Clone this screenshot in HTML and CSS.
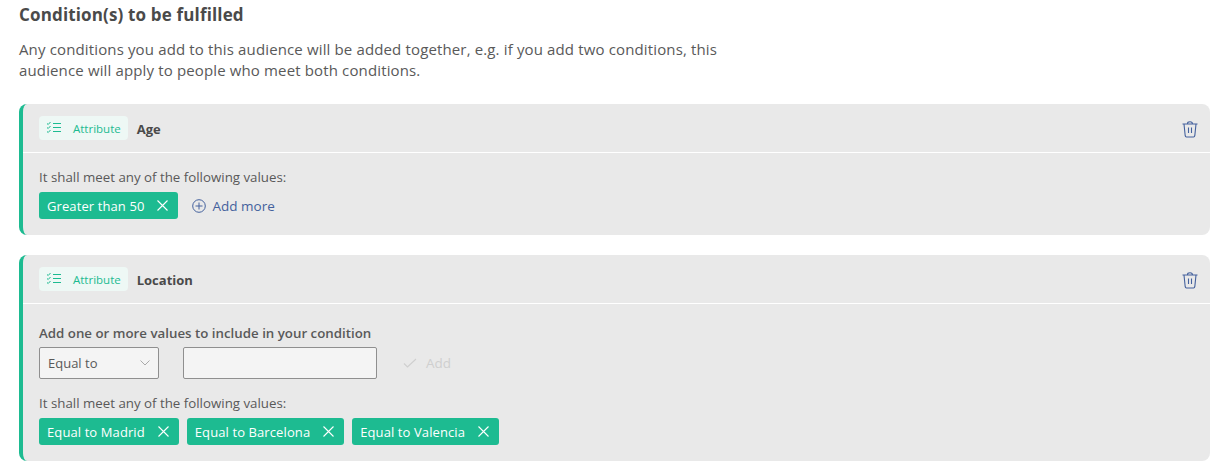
FILE: index.html
```html
<!DOCTYPE html>
<html lang="en">
<head>
    <meta charset="UTF-8">
    <title>Conditions</title>
    <link rel="stylesheet" href="styles.css">
</head>
<body>
    <h2 class="title">Condition(s) to be fulfilled</h2>
    <p class="intro">Any conditions you add to this audience will be added together, e.g. if you add two conditions, this audience will apply to people who meet both conditions.</p>

    <div class="card">
        <div class="card-head">
            <span class="badge">
                <svg class="badge-icon" width="16" height="14" viewBox="0 0 16 14"><path d="M1 2.5l1.2 1L4.5 1M1 6.5l1.2 1L4.5 5M1 10.5l1.2 1L4.5 9M7 2.5h8M7 6.5h8M7 10.5h8" fill="none" stroke="#1dbb91" stroke-width="1"/></svg>
                Attribute
            </span>
            <span class="card-name">Age</span>
            <svg class="trash" width="16" height="17" viewBox="0 0 16 17"><path d="M.5 3h15M2 3l1.2 11.7c.1.7.5 1.3 1.2 1.3h7.2c.7 0 1.1-.6 1.2-1.3L14 3M5.5 3C5.5 1.4 6 .7 8 .7s2.5.7 2.5 2.3M6.5 6.5v5.5M9.500 6.500v5.500" fill="none" stroke="#44619d" stroke-width="1.1"/></svg>
        </div>
        <div class="card-body">
            <div class="label">It shall meet any of the following values:</div>
            <div class="tags">
                <span class="tag">Greater than 50 <svg class="tag-x" width="11" height="11" viewBox="0 0 11 11"><path d="M.5.5l10 10M10.5.5l-10 10" stroke="#fff" stroke-width="1.1"/></svg></span>
                <span class="add-more">
                    <svg width="14" height="14" viewBox="0 0 14 14"><circle cx="7" cy="7" r="6.3" fill="none" stroke="#44619d"/><path d="M7 3.5v7M3.5 7h7" stroke="#44619d"/></svg>
                    Add more
                </span>
            </div>
        </div>
    </div>

    <div class="card">
        <div class="card-head">
            <span class="badge">
                <svg class="badge-icon" width="16" height="14" viewBox="0 0 16 14"><path d="M1 2.5l1.2 1L4.5 1M1 6.5l1.2 1L4.5 5M1 10.5l1.2 1L4.5 9M7 2.5h8M7 6.5h8M7 10.5h8" fill="none" stroke="#1dbb91" stroke-width="1"/></svg>
                Attribute
            </span>
            <span class="card-name">Location</span>
            <svg class="trash" width="16" height="17" viewBox="0 0 16 17"><path d="M.5 3h15M2 3l1.2 11.7c.1.7.5 1.3 1.2 1.3h7.2c.7 0 1.1-.6 1.2-1.3L14 3M5.5 3C5.5 1.4 6 .7 8 .7s2.5.7 2.5 2.3M6.5 6.5v5.5M9.500 6.500v5.500" fill="none" stroke="#44619d" stroke-width="1.1"/></svg>
        </div>
        <div class="card-body">
            <div class="label-strong">Add one or more values to include in your condition</div>
            <div class="form-row">
                <div class="select">Equal to
                    <svg width="10" height="6" viewBox="0 0 10 6"><path d="M.5.5L5 5 9.5.5" fill="none" stroke="#aaa"/></svg>
                </div>
                <div class="text-input"></div>
                <span class="add-btn">
                    <svg width="14" height="10" viewBox="0 0 14 10"><path d="M1 5.5L4.5 9 13 1" fill="none" stroke="#cfcfcf" stroke-width="1.1"/></svg>
                    Add
                </span>
            </div>
            <div class="label">It shall meet any of the following values:</div>
            <div class="tags">
                <span class="tag">Equal to Madrid <svg class="tag-x" width="11" height="11" viewBox="0 0 11 11"><path d="M.5.5l10 10M10.5.5l-10 10" stroke="#fff" stroke-width="1.1"/></svg></span>
                <span class="tag">Equal to Barcelona <svg class="tag-x" width="11" height="11" viewBox="0 0 11 11"><path d="M.5.5l10 10M10.5.5l-10 10" stroke="#fff" stroke-width="1.1"/></svg></span>
                <span class="tag">Equal to Valencia <svg class="tag-x" width="11" height="11" viewBox="0 0 11 11"><path d="M.5.5l10 10M10.5.5l-10 10" stroke="#fff" stroke-width="1.1"/></svg></span>
            </div>
        </div>
    </div>
</body>
</html>
```
FILE: styles.css
```css
body {
    background-color: #fff;
    color: #595959;
    font-family: 'Open Sans', 'Noto Sans', sans-serif;
    margin: 0;
    padding: 5px 18px 10px 19px;
    overflow: hidden;
}
.title {
    color: #4a4a4a;
    font-size: 17px;
    font-weight: 700;
    letter-spacing: 0.15px;
    line-height: 20px;
    margin: 0 0 14px;
}
.intro {
    font-size: 15px;
    letter-spacing: 0.14px;
    line-height: 21px;
    margin: 0 0 23px;
    max-width: 712px;
}
.card {
    background: #e9e9e9;
    border-left: 4px solid #1dbb91;
    border-radius: 8px;
    margin-bottom: 20px;
}
.card-head {
    align-items: center;
    border-bottom: 1px solid #fff;
    display: flex;
    height: 48px;
    padding: 0 12px 0 16px;
}
.badge {
    align-items: center;
    background: #eef8f5;
    border-radius: 4px;
    color: #1dbb91;
    display: flex;
    font-size: 11.5px;
    gap: 11px;
    height: 24px;
    padding: 0 7px;
}
.card-name {
    color: #4a4a4a;
    flex: 1;
    font-size: 13px;
    font-weight: 700;
    margin-left: 9px;
    padding-top: 2px;
}
.trash {
    margin-top: 3px;
}
.card-body {
    padding: 15px 16px 16px;
}
.label {
    font-size: 13.3px;
    line-height: 18px;
    margin-bottom: 6px;
}
.label-strong {
    font-size: 13.3px;
    font-weight: 600;
    line-height: 18px;
    margin-bottom: 5px;
    margin-top: 5px;
}
.tags {
    align-items: center;
    display: flex;
    gap: 8px;
}
.tag {
    align-items: center;
    background: #1dbb91;
    border-radius: 3px;
    color: #fff;
    display: flex;
    font-size: 13px;
    font-weight: 500;
    gap: 13px;
    height: 27px;
    letter-spacing: 0.1px;
    padding: 0 10px 0 8px;
}
.add-more {
    align-items: center;
    color: #44619d;
    display: flex;
    font-size: 13.5px;
    gap: 6px;
    margin-left: 6px;
}
.form-row {
    align-items: center;
    display: flex;
    margin-bottom: 15px;
}
.select {
    align-items: center;
    background: #f4f4f4;
    border: 1px solid #8f8f8f;
    border-radius: 2px;
    box-sizing: border-box;
    display: flex;
    font-size: 13px;
    height: 32px;
    justify-content: space-between;
    padding: 0 8px;
    width: 120px;
}
.text-input {
    background: #f4f4f4;
    border: 1px solid #8f8f8f;
    border-radius: 2px;
    box-sizing: border-box;
    height: 32px;
    margin-left: 24px;
    width: 194px;
}
.add-btn {
    align-items: center;
    color: #cfcfcf;
    display: flex;
    font-size: 13.5px;
    gap: 9px;
    margin-left: 26px;
}
```
